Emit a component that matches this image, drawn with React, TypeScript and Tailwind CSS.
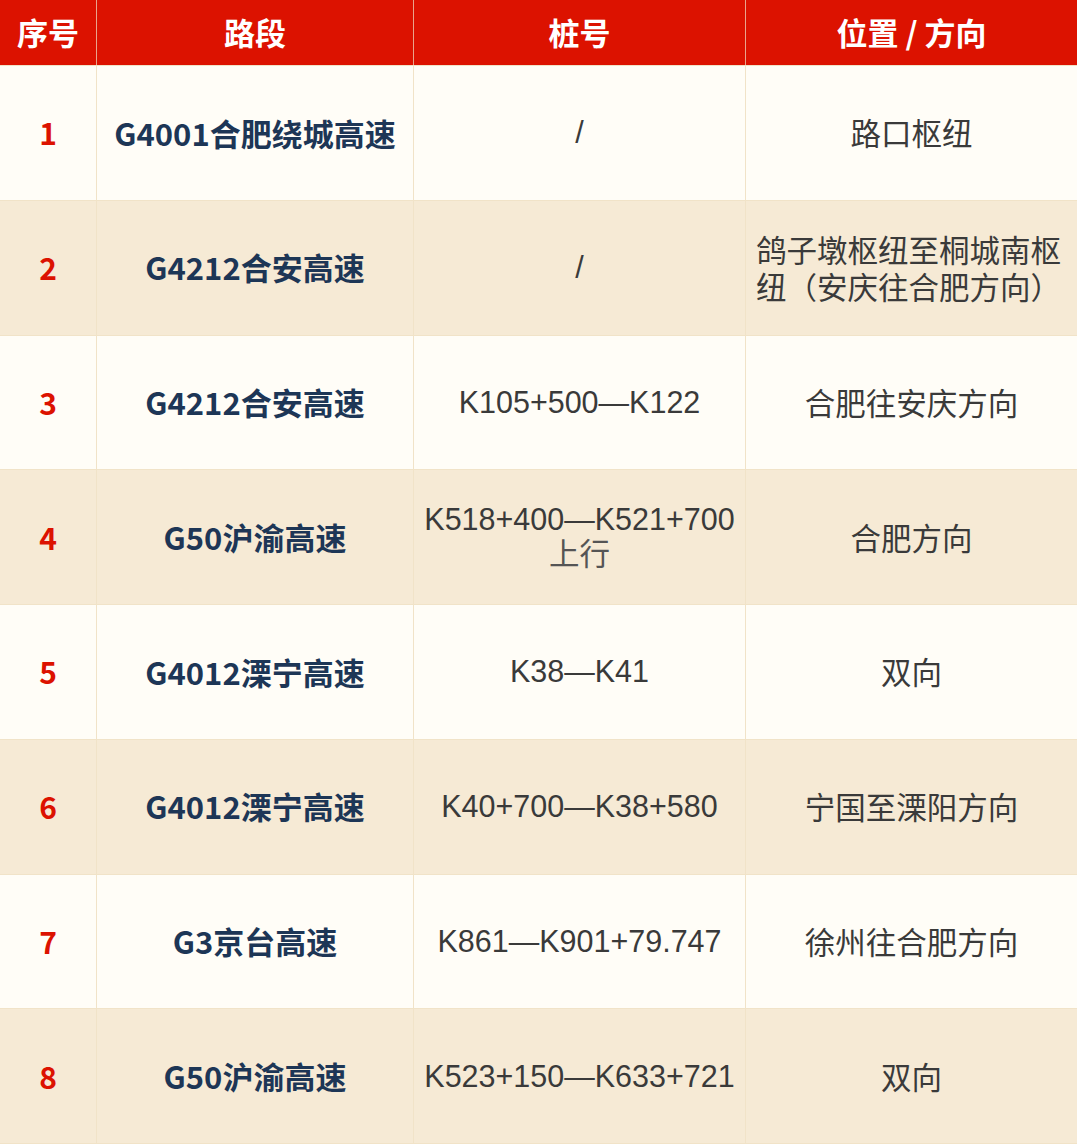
import React from 'react';

type Row = {
  no: string;
  road: string;
  pile: React.ReactNode;
  place: React.ReactNode;
};

const rows: Row[] = [
  { no: '1', road: 'G4001合肥绕城高速', pile: '/', place: '路口枢纽' },
  { no: '2', road: 'G4212合安高速', pile: '/', place: '鸽子墩枢纽至桐城南枢纽（安庆往合肥方向）' },
  { no: '3', road: 'G4212合安高速', pile: 'K105+500—K122', place: '合肥往安庆方向' },
  {
    no: '4',
    road: 'G50沪渝高速',
    pile: (
      <>
        K518+400—K521+700
        <br />
        <span className="text-[#555]">上行</span>
      </>
    ),
    place: '合肥方向',
  },
  { no: '5', road: 'G4012溧宁高速', pile: 'K38—K41', place: '双向' },
  { no: '6', road: 'G4012溧宁高速', pile: 'K40+700—K38+580', place: '宁国至溧阳方向' },
  { no: '7', road: 'G3京台高速', pile: 'K861—K901+79.747', place: '徐州往合肥方向' },
  { no: '8', road: 'G50沪渝高速', pile: 'K523+150—K633+721', place: '双向' },
];

const cols = 'grid grid-cols-[97px_317px_332px_331px]';
const cjk = "font-['Noto_Sans_CJK_SC',sans-serif]";
const latin = "font-['Liberation_Sans','Noto_Sans_CJK_SC',sans-serif]";

export default function App() {
  return (
    <div className="w-[1080px] h-[1144px] bg-white">
      <div className="w-[1077px] border-b border-[#f1e3c8]">
        <div className={`${cols} h-[65px] bg-[#dc1200] text-white text-[31px] font-bold ${cjk}`}>
          <div className="flex items-center justify-center border-r border-[#e9a48c]">序号</div>
          <div className="flex items-center justify-center border-r border-[#e9a48c]">路段</div>
          <div className="flex items-center justify-center border-r border-[#e9a48c]">桩号</div>
          <div className="flex items-center justify-center">位置 / 方向</div>
        </div>
        {rows.map((r, i) => (
          <div
            key={i}
            className={`${cols} h-[134.75px] border-t border-[#f1e3c8] ${
              i % 2 === 0 ? 'bg-[#fffdf7]' : 'bg-[#f6ead5]'
            }`}
          >
            <div className={`flex items-center justify-center border-r border-[#f1e3c8] text-[30px] font-bold text-[#dc1200] ${cjk}`}>
              {r.no}
            </div>
            <div className={`flex items-center justify-center border-r border-[#f1e3c8] text-[31px] font-bold text-[#1d3656] ${cjk}`}>
              {r.road}
            </div>
            <div className={`flex items-center justify-center border-r border-[#f1e3c8] text-center text-[30.5px] leading-[35px] text-[#3a3a3a] ${latin}`}>
              <div>{r.pile}</div>
            </div>
            <div className={`flex items-center justify-center px-[10px] text-center text-[30.5px] leading-[37px] text-[#3a3a3a] ${cjk}`}>
              <div className={r.no === '2' ? 'text-left' : ''}>{r.place}</div>
            </div>
          </div>
        ))}
      </div>
    </div>
  );
}
